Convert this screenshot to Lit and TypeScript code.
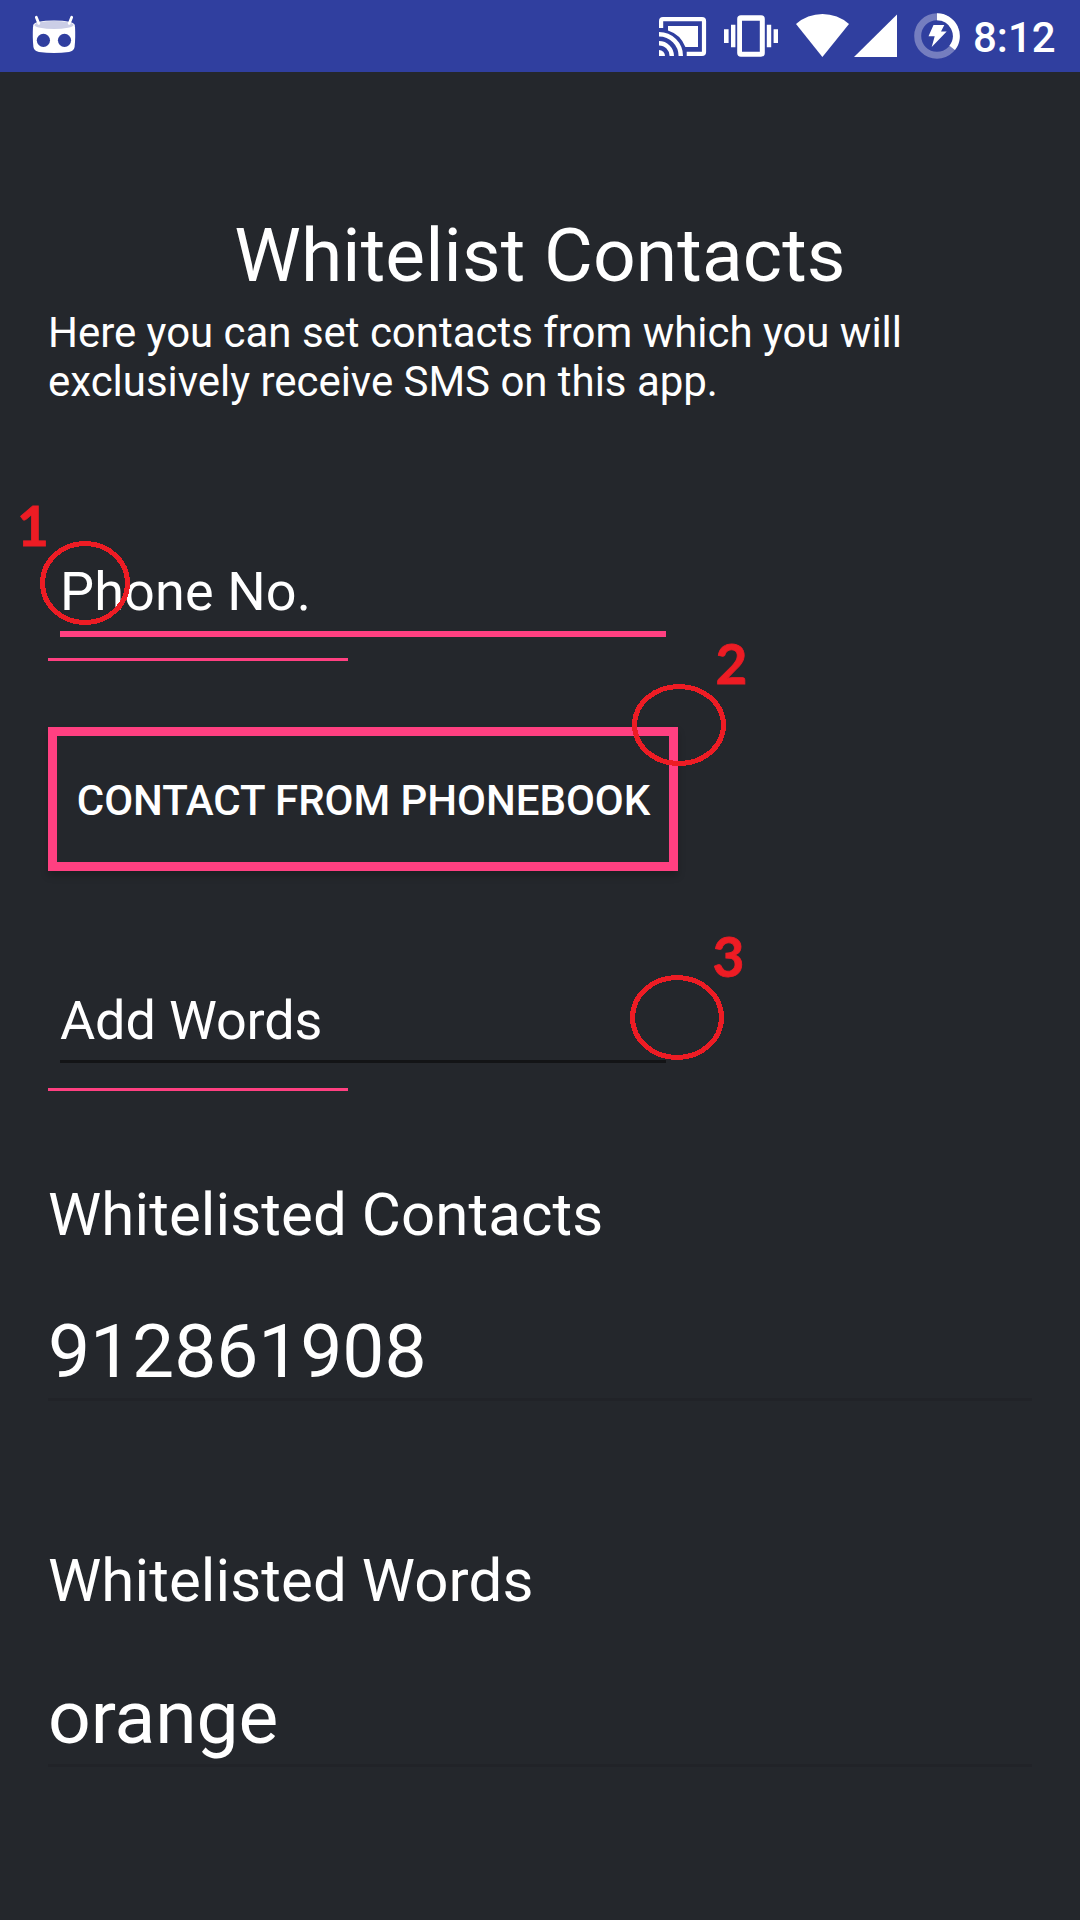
import { LitElement, html, css, svg } from "lit";
import { customElement, property } from "lit/decorators.js";

@customElement("status-bar")
export class StatusBar extends LitElement {
  @property() time = "8:12";

  static styles = css`
    :host {
      display: flex;
      justify-content: space-between;
      align-items: center;
      box-sizing: border-box;
      height: 72px;
      padding: 0 24px 0 32px;
      background: #303f9f;
      color: #fff;
      font: 500 42px/49px Roboto, sans-serif;
    }
    svg {
      display: block;
      height: 72px;
      fill: #fff;
    }
    .tray {
      display: flex;
      align-items: center;
    }
    .robot { width: 44px; }
    .cast { width: 48px; margin-right: 16px; }
    .vibrate { width: 56px; margin-right: 16px; }
    .wifi { width: 54px; margin-right: 4px; }
    .signal { width: 44px; margin-right: 17px; }
    .battery { width: 46px; margin-right: 13px; }
    .time { width: 83px; margin-top: 3px; white-space: nowrap; }
    .line { fill: none; stroke: #fff; }
    .lid { fill: #cbcee6; }
    .eye { fill: #303f9f; }
    .track { fill: none; stroke: #757ebf; stroke-width: 7; }
    .charge { fill: none; stroke: #fff; stroke-width: 7; }
  `;

  render() {
    return html`
      <svg class="robot" viewBox="32 0 44 72">
        <path d="M33 26 Q34 29 54 29 Q74 29 75 26 Q75.6 38 74.6 47 Q74 51 69 52 Q54 54 39 52 Q34 51 33.4 47 Q32.4 38 33 26Z"/>
        <path d="M33.2 25 Q35 20.5 54 20.5 Q73 20.5 74.8 25 V29 H33.2Z"/>
        <ellipse class="lid" cx="54" cy="25" rx="19.6" ry="4"/>
        <path class="line" stroke-width="2.8" stroke-linecap="round" d="M36.3 17.2 L38.8 23.4 M71.7 17.2 L69.2 23.4"/>
        <circle class="eye" cx="43.4" cy="40.3" r="6.6"/>
        <circle class="eye" cx="64.5" cy="40.3" r="6.6"/>
      </svg>
      <div class="tray">
        <svg class="cast" viewBox="659 0 48 72">
          <path class="line" stroke-width="4.2" d="M661.1 28 V21 Q661.1 19.2 663 19.2 H702 Q704 19.2 704 21 V52 Q704 53.8 702 53.8 H686.7"/>
          <path d="M668 26 H698 V47 H685.4 A27.5 27.5 0 0 0 668 30.4Z"/>
          <path d="M659 50 A6 6 0 0 1 665 56 H659Z"/>
          <path class="line" stroke-width="4.4" d="M659 43.2 A12.8 12.8 0 0 1 671.8 56 M659 34.2 A21.8 21.8 0 0 1 680.8 56"/>
        </svg>
        <svg class="vibrate" viewBox="723 0 56 72">
          <path fill-rule="evenodd" d="M741 15.3 H761 Q764.8 15.3 764.8 19 V53 Q764.8 56.7 761 56.7 H741 Q737.2 56.7 737.2 53 V19 Q737.2 15.3 741 15.3Z M742 20.7 V51.7 H759.8 V20.7Z"/>
          <path d="M731 24.8H735.4V47.2H731Z M724 29.2H728.6V43H724Z M766.8 24.8H771.2V47.2H766.8Z M773.6 29.2H778V43H773.6Z"/>
        </svg>
        <svg class="wifi" viewBox="795 0 54 72">
          <path d="M822.4 57 L796 24 A40 40 0 0 1 849 24Z"/>
        </svg>
        <svg class="signal" viewBox="853 0 44 72">
          <path d="M854 57 H897 V14.5Z"/>
        </svg>
        <svg class="battery" viewBox="914 0 46 72">
          <circle class="track" cx="937" cy="36" r="19.3"/>
          <path class="charge" d="M937 16.7 A19.3 19.3 0 0 1 952.2 47.9"/>
          <path d="M933.5 25 H944.3 L941 31.4 H946.7 L931.7 47 L934.7 36.2 H928.5Z"/>
        </svg>
        <span class="time">${this.time}</span>
      </div>
    `;
  }
}

@customElement("app-root")
export class AppRoot extends LitElement {
  contacts = ["912861908"];
  words = ["orange"];
  marks = [
    { cx: 85, cy: 583, rx: 42.5, ry: 39.5, label: "1", x: 17, y: 546 },
    { cx: 679, cy: 725, rx: 44.5, ry: 38.5, label: "2", x: 715.5, y: 684 },
    { cx: 677, cy: 1017.5, rx: 44.5, ry: 40, label: "3", x: 712.5, y: 977 },
  ];

  static styles = css`
    :host {
      display: block;
      position: relative;
      height: 1920px;
      overflow: hidden;
      background: #24272c;
      color: #fff;
      font-family: Roboto, sans-serif;
    }
    .page {
      display: flex;
      flex-direction: column;
      padding: 139px 48px 0;
    }
    h1, h2, p { margin: 0; font-weight: 400; }
    .title { font-size: 75px; line-height: 88px; letter-spacing: 0.1px; text-align: center; }
    .intro { font-size: 42px; line-height: 49px; letter-spacing: -0.03px; margin-top: 9px; }
    .field {
      width: 606px;
      margin-left: 12px;
      box-sizing: border-box;
      font-size: 54px;
      line-height: 64px;
    }
    .phone {
      height: 77px;
      margin-top: 154px;
      border-bottom: 6px solid #ff4081;
      letter-spacing: 0.12px;
    }
    .word {
      height: 74px;
      margin-top: 118px;
      border-bottom: 3px solid #131416;
      letter-spacing: -0.14px;
    }
    .accent { width: 300px; height: 3px; background: #ff4081; }
    .phone + .accent { margin-top: 21px; }
    .word + .accent { margin-top: 25px; }
    .pick {
      display: flex;
      justify-content: center;
      align-items: center;
      box-sizing: border-box;
      width: 630px;
      height: 144px;
      margin: 66px 0 0;
      padding: 3px 0 0 1px;
      border: 9px solid #ff4081;
      border-radius: 0;
      background: #24272c;
      color: #fff;
      font: 500 42px/49px Roboto, sans-serif;
      letter-spacing: -0.04px;
      text-transform: uppercase;
      white-space: nowrap;
      box-shadow: 0 5px 7px rgba(0, 0, 0, 0.22);
    }
    .heading { font-size: 60px; line-height: 70px; letter-spacing: 0.1px; }
    .contacts { margin-top: 89px; }
    .words { margin-top: 145px; }
    .entry {
      font-size: 75px;
      line-height: 88px;
      box-sizing: border-box;
      height: 94px;
      border-bottom: 3px solid #212328;
      letter-spacing: -0.1px;
    }
    .heading + .entry { margin-top: 57px; }
    .overlay {
      position: absolute;
      inset: 0;
      width: 1080px;
      height: 1920px;
    }
    .ring { fill: none; stroke: #ed1c24; stroke-width: 5; shape-rendering: crispEdges; }
    .num { fill: #ed1c24; stroke: #ed1c24; stroke-width: 0.8; font: 700 55px Lato, sans-serif; }
  `;

  render() {
    return html`
      <status-bar></status-bar>
      <main class="page">
        <h1 class="title">Whitelist Contacts</h1>
        <p class="intro">Here you can set contacts from which you will exclusively receive SMS on this app.</p>
        <div class="field phone">Phone No.</div>
        <div class="accent"></div>
        <button class="pick">Contact from phonebook</button>
        <div class="field word">Add Words</div>
        <div class="accent"></div>
        <h2 class="heading contacts">Whitelisted Contacts</h2>
        ${this.contacts.map((c) => html`<div class="entry">${c}</div>`)}
        <h2 class="heading words">Whitelisted Words</h2>
        ${this.words.map((w) => html`<div class="entry">${w}</div>`)}
      </main>
      <svg class="overlay" viewBox="0 0 1080 1920">
        ${this.marks.map(
          (m) => svg`
            <ellipse class="ring" cx=${m.cx} cy=${m.cy} rx=${m.rx} ry=${m.ry}></ellipse>
            <text class="num" x=${m.x} y=${m.y}>${m.label}</text>`
        )}
      </svg>
    `;
  }
}
